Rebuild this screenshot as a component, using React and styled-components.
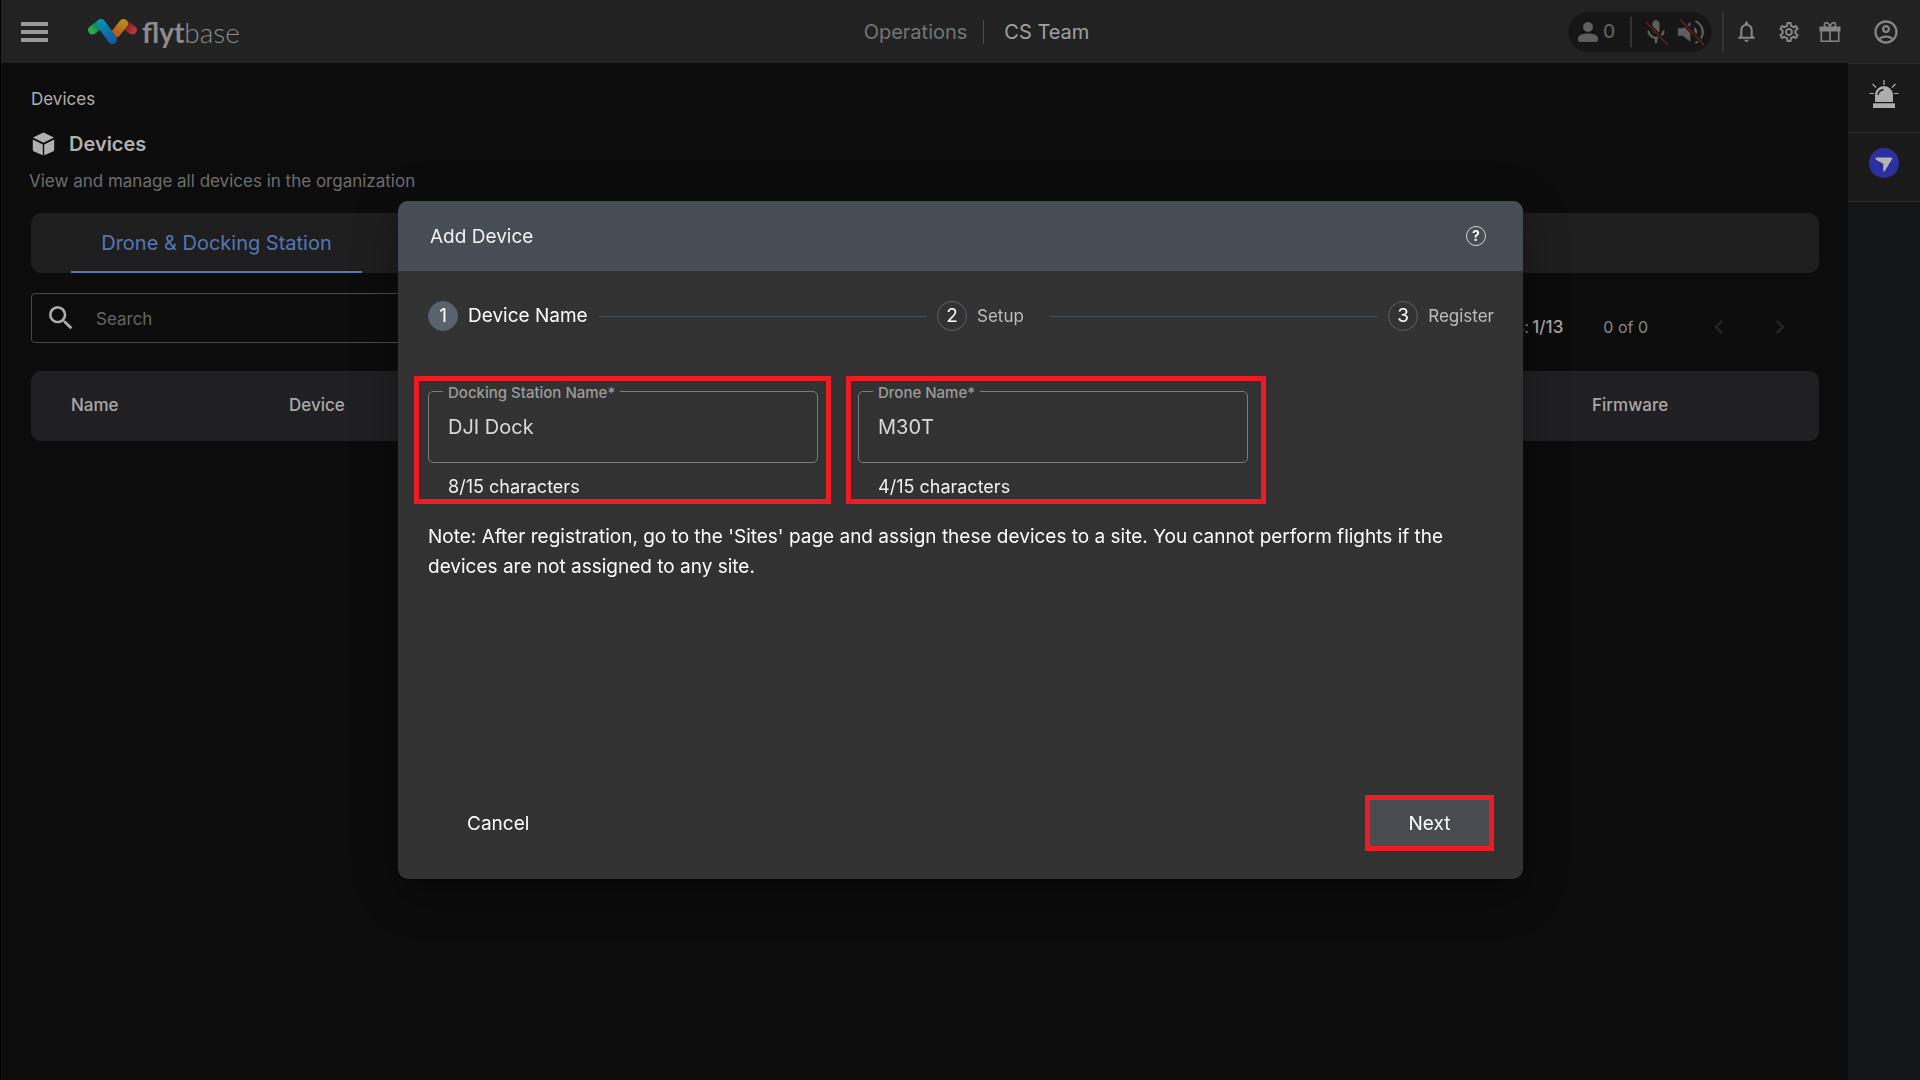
import React, { useState } from "react";
import styled, { createGlobalStyle } from "styled-components";
import {
  MdSearch,
  MdOutlineAccountCircle,
  MdNotificationsNone,
  MdOutlineSettings,
  MdChevronLeft,
  MdChevronRight,
} from "react-icons/md";

const GlobalStyle = createGlobalStyle`
  *, *::before, *::after { box-sizing: border-box; }
  body { margin: 0; background: #0c0c0c; }
  body, button, input, table {
    font-family: Inter, "Open Sans", "Liberation Sans", sans-serif;
    font-size: 17px;
    line-height: 24px;
  }
  button { border: 0; padding: 0; background: none; color: inherit; cursor: pointer; }
  h1, h2, p, ol { margin: 0; padding: 0; }
  svg { display: block; flex: none; }
`;

const Page = styled.div`
  display: flex;
  flex-direction: column;
  min-height: 100vh;
  border-left: 1px solid #000;
  color: #b0b0b0;
`;

const TopBar = styled.header`
  display: grid;
  grid-template-columns: 1fr auto 1fr;
  align-items: center;
  height: 63px;
  padding: 0 20px;
  background: #222222;
`;

const Brand = styled.div`
  display: flex;
  align-items: center;
  gap: 40px;
`;

const MenuButton = styled.button`
  display: grid;
  gap: 4px;
  width: 27px;
  span { height: 4px; background: #999999; }
`;

const Logo = styled.a`
  display: flex;
  align-items: center;
  gap: 5px;
  color: #8c8c8c;
  text-decoration: none;
  font-family: Lato, sans-serif;
  font-size: 28px;
  line-height: 30px;
  font-weight: 300;
  b { font-weight: 700; }
`;

const Crumbs = styled.nav`
  display: flex;
  align-items: center;
  padding-left: 32px;
  font-size: 20px;
  a { color: #757575; text-decoration: none; padding-right: 16px; }
  span {
    color: #a0a0a0;
    padding-left: 20px;
    border-left: 1px solid #4c4c4c;
  }
`;

const Tools = styled.div`
  display: flex;
  align-items: center;
  justify-content: flex-end;
  color: #858585;
`;

const Pill = styled.div`
  display: flex;
  align-items: center;
  height: 40px;
  padding: 0 6px 0 10px;
  border-radius: 20px;
  background: #161616;
  color: #5e5e5e;
`;

const Count = styled.span`
  width: 32px;
  padding-left: 5px;
  font-size: 19px;
  font-weight: 500;
`;

const Rule = styled.span`
  width: ${(p) => p.$w}px;
  height: ${(p) => p.$h}px;
  background: #333333;
`;

const IconRow = styled.div`
  display: flex;
  align-items: center;
  gap: 18px;
  padding-left: 10px;
`;

const MuteIcons = styled.div`
  display: flex;
  align-items: center;
  gap: 6px;
  padding-left: 10px;
`;

const Split = styled.div`
  flex: 1;
  display: flex;
`;

const Main = styled.main`
  flex: 1;
  min-width: 0;
  padding: 24px 29px 0 30px;
`;

const PageTitle = styled.h1`
  display: flex;
  align-items: center;
  gap: 14px;
  margin-top: 21px;
  font-size: 20px;
  line-height: 24px;
  font-weight: 600;
`;

const Subtitle = styled.p`
  margin: 13px 0 0 -2px;
  color: #6e6e6e;
`;

const TabBar = styled.div`
  display: flex;
  height: 60px;
  margin-top: 20px;
  padding: 0 40px;
  border-radius: 10px;
  background: #1e1e1e;
`;

const Tab = styled.button`
  width: 291px;
  padding-top: 2px;
  border-bottom: 2px solid #5a78b4;
  color: #5577b5;
  font-size: 20px;
`;

const Filters = styled.div`
  display: flex;
  align-items: center;
  justify-content: space-between;
  margin-top: 20px;
  padding-right: 25px;
`;

const SearchBox = styled.label`
  display: flex;
  align-items: center;
  gap: 19px;
  width: 480px;
  height: 50px;
  padding: 0 13px;
  border: 1px solid #4a4a4a;
  border-radius: 4px;
  input {
    flex: 1;
    border: 0;
    padding: 2px 0 0;
    outline: 0;
    background: none;
    color: inherit;
  }
  input::placeholder { color: #666666; opacity: 1; }
`;

const Pager = styled.div`
  display: flex;
  align-items: center;
  padding-top: 18px;
  color: #777777;
  b { margin-left: 3px; font-weight: 500; color: #a8a8a8; }
  button { color: #262626; margin-left: 33px; }
`;

const Range = styled.span`
  margin-left: 40px;
  padding-right: 24px;
  color: #888888;
  font-size: 16px;
`;

const Table = styled.table`
  width: 100%;
  margin-top: 28px;
  border-spacing: 0;
  border-radius: 10px;
  background: #202022;
  th {
    height: 70px;
    padding: 0 0 2px;
    text-align: left;
    font-weight: 500;
    color: #a8a8a8;
  }
  th:first-child { width: 258px; padding-left: 40px; }
  th:last-child { width: 227px; }
`;

const Rail = styled.aside`
  width: 72px;
  background: #141517;
`;

const RailButton = styled.button`
  display: flex;
  justify-content: center;
  align-items: flex-start;
  width: 100%;
  height: 69px;
  padding-top: 15px;
  background: #1a1a1a;
  border-top: 1px solid #2c2c2c;
  &:last-child { height: 70px; border-bottom: 1px solid #2c2c2c; }
`;

const Overlay = styled.div`
  position: fixed;
  inset: 0 0 0 1px;
  display: grid;
  place-items: center;
`;

const Dialog = styled.section`
  display: flex;
  flex-direction: column;
  width: min(1125px, 94vw);
  min-height: 678px;
  overflow: hidden;
  border-radius: 10px;
  background: #323232;
  color: #ffffff;
  font-size: 19px;
  box-shadow: 0 11px 15px -7px rgba(0, 0, 0, 0.2), 0 24px 38px 3px rgba(0, 0, 0, 0.14),
    0 9px 46px 8px rgba(0, 0, 0, 0.12);
`;

const DialogHead = styled.div`
  display: flex;
  align-items: center;
  justify-content: space-between;
  height: 70px;
  padding: 0 37px 0 32px;
  background: #464d54;
  h2 { padding-top: 2px; font-size: 19px; line-height: 24px; font-weight: 400; color: #f2f2f2; }
`;

const HelpButton = styled.button`
  width: 20px;
  height: 20px;
  border: 1px solid #d5d8da;
  border-radius: 50%;
  color: #ffffff;
  font-size: 14px;
  line-height: 18px;
  font-weight: 700;
`;

const DialogBody = styled.form`
  flex: 1;
  display: flex;
  flex-direction: column;
  padding: 30px 29px 28px 30px;
`;

const Steps = styled.ol`
  display: flex;
  align-items: center;
  list-style: none;
`;

const Step = styled.li`
  display: flex;
  align-items: center;
  gap: 10px;
  height: 30px;
  color: ${(p) => (p.$active ? "#ffffff" : "#bdbdbd")};
  font-size: ${(p) => (p.$active ? 19 : 17)}px;
`;

const StepNumber = styled.span`
  width: 30px;
  height: 30px;
  border: 1px solid #59636d;
  border-radius: 50%;
  background: ${(p) => (p.$active ? "#59636d" : "none")};
  color: #ffffff;
  font-size: 19px;
  line-height: 28px;
  text-align: center;
`;

const StepLine = styled.li`
  flex: 1;
  height: 1px;
  margin: 0 10px ${(p) => (p.$wide ? "0 26px" : "0 11px")};
  background: #48515a;
`;

const Fields = styled.div`
  display: flex;
  gap: 40px;
  margin-top: 60px;
`;

/* Field group with a callout frame drawn over it */
const Field = styled.div`
  position: relative;
  width: 390px;
  &::after {
    content: "";
    position: absolute;
    inset: -15px ${(p) => p.$right}px -5px ${(p) => p.$left}px;
    border: 5px solid #ed1c24;
    pointer-events: none;
  }
  label {
    position: absolute;
    top: -10px;
    left: 15px;
    padding: 0 5px;
    background: #323232;
    color: #9c9c9c;
    font-size: 15px;
    font-weight: 500;
  }
  input {
    display: block;
    width: 100%;
    height: 72px;
    padding: 0 19px;
    border: 1px solid #7c7c7c;
    border-radius: 5px;
    outline: 0;
    background: none;
    color: #d9d9d9;
    font-size: 20px;
  }
  p {
    padding: 12px 20px 0;
    font-size: 18px;
    color: #f2f2f2;
  }
`;

const Note = styled.p`
  margin-top: 23px;
  font-size: 19px;
  line-height: 30px;
`;

const Actions = styled.div`
  display: flex;
  justify-content: space-between;
  align-items: center;
  margin-top: auto;
  padding-left: 39px;
  button { padding-top: 2px; font-size: 19px; }
`;

const NextButton = styled.button`
  && {
    width: 129px;
    height: 56px;
    border: 5px solid #ed1c24;
    background: #484c50;
  }
`;

const LogoMark = () => (
  <svg width="49" height="25" viewBox="0 0 49 25" fill="none" strokeWidth="9" strokeLinecap="round" aria-hidden="true">
    <defs>
      <linearGradient id="blue" x1="12" y1="3" x2="25" y2="22" gradientUnits="userSpaceOnUse">
        <stop stopColor="#0590b4" />
        <stop offset="1" stopColor="#1559a8" />
      </linearGradient>
      <linearGradient id="orange" x1="36" y1="3" x2="27" y2="18" gradientUnits="userSpaceOnUse">
        <stop stopColor="#b58a22" />
        <stop offset="1" stopColor="#b8530f" />
      </linearGradient>
      <linearGradient id="green" x1="4" y1="12" x2="13" y2="5" gradientUnits="userSpaceOnUse">
        <stop stopColor="#2ba84e" />
        <stop offset="1" stopColor="#176b4a" />
      </linearGradient>
      <linearGradient id="red" x1="45" y1="12" x2="36" y2="5" gradientUnits="userSpaceOnUse">
        <stop stopColor="#b5333a" />
        <stop offset="1" stopColor="#7c1820" />
      </linearGradient>
    </defs>
    <path d="M4.5 11 12.5 5" stroke="url(#green)" />
    <path d="M44.5 11 36 5" stroke="url(#red)" />
    <path d="M28 14 35.5 4.5" stroke="url(#orange)" />
    <path d="M13 4.5 24.5 20.5" stroke="url(#blue)" />
  </svg>
);

const PersonIcon = () => (
  <svg width="20" height="20" viewBox="0 0 20 20" fill="currentColor" aria-hidden="true">
    <circle cx="10" cy="5" r="5" />
    <path d="M0 16.5C0 13 4.5 11.5 10 11.5S20 13 20 16.5V18a2 2 0 0 1-2 2H2a2 2 0 0 1-2-2z" />
  </svg>
);

const MutedIcon = ({ d, size, line }) => (
  <svg width={size} height={size} viewBox="0 0 24 24" aria-hidden="true">
    <path d={d} fill="currentColor" />
    <path d={line} stroke="#161616" strokeWidth="3.4" />
    <path d={line} stroke="#7c1f1f" strokeWidth="1" />
  </svg>
);

const MIC =
  "M12 14c1.66 0 3-1.34 3-3V5c0-1.66-1.34-3-3-3S9 3.34 9 5v6c0 1.66 1.34 3 3 3zm5.3-3c0 3-2.54 5.1-5.3 5.1S6.7 14 6.7 11H4.6c0 3.5 2.9 6.4 6.3 6.9V21.6h2.2V17.9c3.4-.5 6.3-3.4 6.3-6.9h-2.1z";
const SPEAKER =
  "M1.5 9v6h4l6 5V4l-6 5zM17 12c0-1.77-1.02-3.29-2.5-4.03v8.05c1.48-.73 2.5-2.25 2.5-4.02zM15.5 2.5v1.7c3.2 1.4 5 4.4 5 7.8s-1.8 6.400-5 7.800V21.500c4.200-1.500 6.800-5.200 6.800-9.500s-2.600-8-6.800-9.500z";

const GiftIcon = () => (
  <svg width="22" height="22" viewBox="0 0 22 22" fill="none" stroke="currentColor" strokeWidth="1.6" aria-hidden="true">
    <path d="M.5 5.500h21V10.500H.5z" fill="currentColor" stroke="none" />
    <path d="M2.3 9.5V20.200H19.7V9.5M11 9.5V20" />
    <path d="M11 6C10.5 3 8.5 1.2 6.7 1.8 4.7 2.5 5 5.2 7 6M11 6c.5-3 2.5-4.8 4.3-4.2 2 .7 1.7 3.4-.3 4.2" />
  </svg>
);

const CubeIcon = () => (
  <svg width="24" height="24" viewBox="0 0 24 24" fill="currentColor" aria-hidden="true">
    <path d="M12.5.5 23 5.6 12.5 10.8 2 5.6z" />
    <path d="M1.8 7.5 11.8 12.5V23.3L3 19.6Q1.8 19 1.8 17.8zM23.2 7.5 13.2 12.5V23.3L22 19.6Q23.2 19 23.2 17.8z" />
  </svg>
);

const SirenIcon = () => (
  <svg width="30" height="30" viewBox="0 0 30 30" aria-hidden="true">
    <path d="M6 23V16a9 9 0 0 1 18 0v7z" fill="#adadad" />
    <path d="M5 24.200h20q1 0 1 1V29H4v-3.800q0-1 1-1z" fill="#adadad" />
    <path d="M9 16q.3-4.500 5.500-5.500" fill="none" stroke="#1a1a1a" strokeWidth="1.4" />
    <path d="M15 1v5M3.5 5 7 8.500M26.5 5 23 8.500M.5 14.500H5M25 14.500h4.5" stroke="#adadad" strokeWidth="1.2" />
  </svg>
);

const NavigatorIcon = () => (
  <svg width="30" height="30" viewBox="0 0 30 30" aria-hidden="true">
    <circle cx="15" cy="15" r="15" fill="#2b309f" />
    <path d="M7.200 9.500H22Q24 9.500 22.900 11.200L15.800 23Q14.600 24.500 14.300 22.500V15.800L7 11.800Q5.800 10 7.200 9.500z" fill="#b5b5b5" />
  </svg>
);

function NameField({ id, label, initial, left, right }) {
  const [value, setValue] = useState(initial);
  return (
    <Field $left={left} $right={right}>
      <input id={id} value={value} maxLength={15} onChange={(e) => setValue(e.target.value)} />
      <label htmlFor={id}>{label}*</label>
      <p>{value.length}/15 characters</p>
    </Field>
  );
}

export default function App() {
  return (
    <>
      <GlobalStyle />
      <Page>
        <TopBar>
          <Brand>
            <MenuButton aria-label="Menu">
              <span />
              <span />
              <span />
            </MenuButton>
            <Logo href="#home">
              <LogoMark />
              <span>
                <b>flyt</b>base
              </span>
            </Logo>
          </Brand>
          <Crumbs>
            <a href="#operations">Operations</a>
            <span>CS Team</span>
          </Crumbs>
          <Tools>
            <Pill>
              <PersonIcon />
              <Count>0</Count>
              <Rule $w={2} $h={30} />
              <MuteIcons>
                <MutedIcon d={MIC} size={28} line="M3.5 3.5 22 23" />
                <MutedIcon d={SPEAKER} size={30} line="M3 1.5 22.5 22.5" />
              </MuteIcons>
            </Pill>
            <IconRow>
              <Rule $w={2} $h={40} />
            </IconRow>
            <IconRow>
              <MdNotificationsNone size={25} />
              <MdOutlineSettings size={24} />
              <GiftIcon />
            </IconRow>
            <IconRow>
              <Rule $w={3} $h={0} />
              <MdOutlineAccountCircle size={28} />
            </IconRow>
          </Tools>
        </TopBar>
        <Split>
          <Main>
            <div>Devices</div>
            <PageTitle>
              <CubeIcon />
              Devices
            </PageTitle>
            <Subtitle>View and manage all devices in the organization</Subtitle>
            <TabBar>
              <Tab>Drone &amp; Docking Station</Tab>
            </TabBar>
            <Filters>
              <SearchBox>
                <MdSearch size={32} color="#adadad" />
                <input type="search" placeholder="Search" aria-label="Search" />
              </SearchBox>
              <Pager>
                <span>
                  s:<b>1/13</b>
                </span>
                <Range>0 of 0</Range>
                <button aria-label="Previous page">
                  <MdChevronLeft size={28} />
                </button>
                <button aria-label="Next page">
                  <MdChevronRight size={28} />
                </button>
              </Pager>
            </Filters>
            <Table>
              <thead>
                <tr>
                  <th>Name</th>
                  <th>Device</th>
                  <th>Firmware</th>
                </tr>
              </thead>
            </Table>
          </Main>
          <Rail>
            <RailButton aria-label="Alerts">
              <SirenIcon />
            </RailButton>
            <RailButton aria-label="Navigator">
              <NavigatorIcon />
            </RailButton>
          </Rail>
        </Split>
      </Page>
      <Overlay>
        <Dialog role="dialog" aria-labelledby="dialog-title">
          <DialogHead>
            <h2 id="dialog-title">Add Device</h2>
            <HelpButton aria-label="Help">?</HelpButton>
          </DialogHead>
          <DialogBody onSubmit={(e) => e.preventDefault()}>
            <Steps>
              <Step $active>
                <StepNumber $active>1</StepNumber>
                Device Name
              </Step>
              <StepLine />
              <Step>
                <StepNumber>2</StepNumber>
                Setup
              </Step>
              <StepLine $wide />
              <Step>
                <StepNumber>3</StepNumber>
                Register
              </Step>
            </Steps>
            <Fields>
              <NameField id="dock" label="Docking Station Name" initial="DJI Dock" left={-14} right={-13} />
              <NameField id="drone" label="Drone Name" initial="M30T" left={-12} right={-18} />
            </Fields>
            <Note>
              Note: After registration, go to the 'Sites' page and assign these devices to a site. You cannot perform
              flights if the devices are not assigned to any site.
            </Note>
            <Actions>
              <button type="button">Cancel</button>
              <NextButton type="submit">Next</NextButton>
            </Actions>
          </DialogBody>
        </Dialog>
      </Overlay>
    </>
  );
}
